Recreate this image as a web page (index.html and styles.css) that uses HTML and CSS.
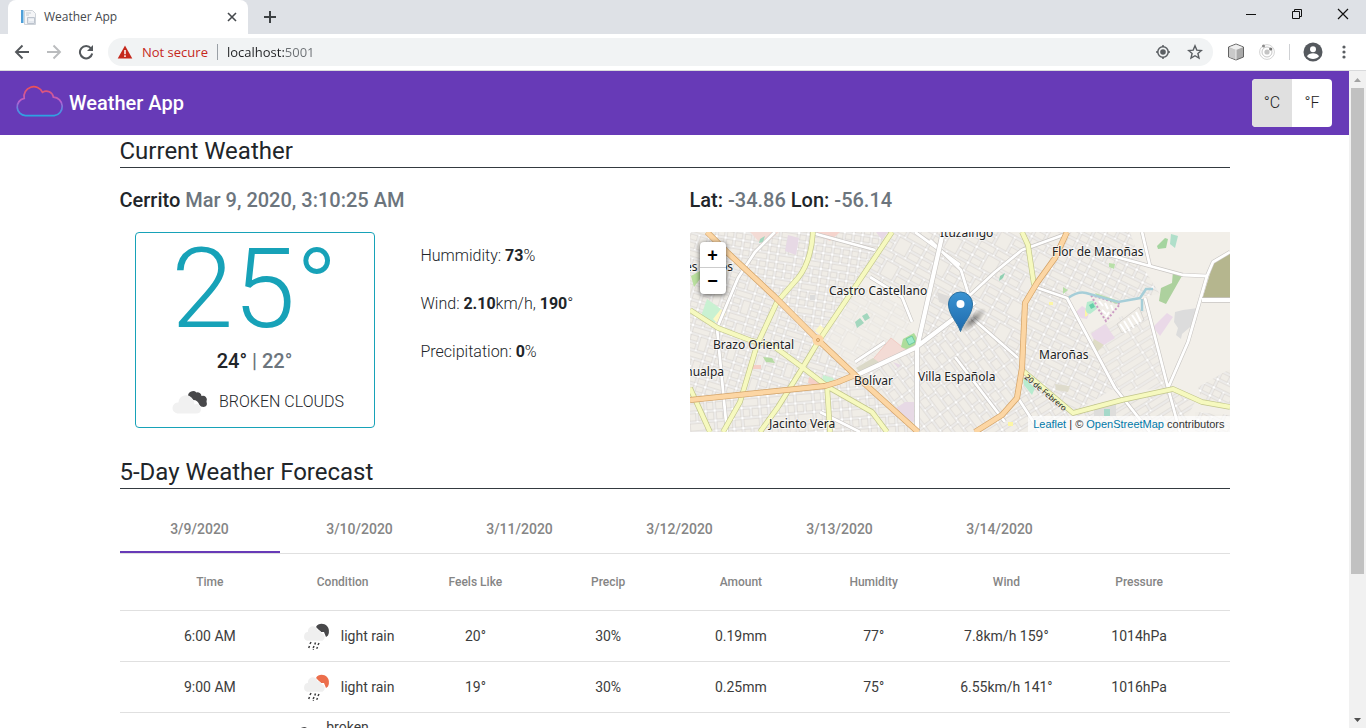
FILE: index.html
```html
<!DOCTYPE html>
<html lang="en">
<head>
<meta charset="utf-8">
<title>Weather App</title>
<link rel="stylesheet" href="styles.css">
</head>
<body>
<div class="tabstrip">
  <div class="browser-tab">
    <svg class="favicon" width="16" height="16" viewBox="0 0 16 16"><path d="M1 1h2v13H1z" fill="#4f9fd8"/><path d="M3 1h1v13H3z" fill="#a5d2f0"/><path d="M4.500 1.500h8l3 3v11h-11z" fill="#f4f5f7" stroke="#ced3d9"/><path d="M6 4h5M6 6h3" stroke="#c4cbd2"/><path d="M7.500 8.500h7v6h-7z" fill="#e4e8ee" stroke="#bdc4ce"/><path d="M9 11h5" stroke="#fff"/></svg>
    <span class="browser-tab-title">Weather App</span>
    <button class="icon-button" aria-label="Close tab"><svg width="10" height="10" viewBox="0 0 10 10"><path d="M1 1l8 8M9 1L1 9" stroke="#45494d" stroke-width="1.6"/></svg></button>
  </div>
  <button class="icon-button new-tab" aria-label="New tab"><svg width="14" height="14" viewBox="0 0 14 14"><path d="M7 1v12M1 7h12" stroke="#3c4043" stroke-width="2"/></svg></button>
  <div class="window-buttons">
    <button class="icon-button" aria-label="Minimize"><svg width="12" height="12" viewBox="0 0 12 12"><path d="M1 6.500h10" stroke="#111"/></svg></button>
    <button class="icon-button" aria-label="Restore"><svg width="12" height="12" viewBox="0 0 12 12" fill="none" stroke="#111"><path d="M1.500 3.500h7v7h-7z"/><path d="M3.500 3.500v-2h7v7h-2"/></svg></button>
    <button class="icon-button" aria-label="Close"><svg width="12" height="12" viewBox="0 0 12 12"><path d="M1 1l10 10M11 1L1 11" stroke="#111" stroke-width="1.200"/></svg></button>
  </div>
</div>
<div class="toolbar">
  <button class="icon-button nav-button" aria-label="Back"><svg width="16" height="16" viewBox="0 0 16 16" fill="none" stroke="#54585c" stroke-width="1.900"><path d="M15 8H2M8.500 1.500L2 8l6.500 6.500"/></svg></button>
  <button class="icon-button nav-button" aria-label="Forward"><svg width="16" height="16" viewBox="0 0 16 16" fill="none" stroke="#babcbe" stroke-width="1.900"><path d="M1 8h13M7.500 1.500L14 8l-6.500 6.500"/></svg></button>
  <button class="icon-button nav-button" aria-label="Reload"><svg width="16" height="16" viewBox="0 0 16 16"><path d="M13 4.300A6.200 6.200 0 1 0 14.200 9.500" fill="none" stroke="#54585c" stroke-width="2"/><path d="M15 1v6H9z" fill="#54585c"/></svg></button>
  <div class="address-bar">
    <svg width="16" height="16" viewBox="0 0 16 16"><path d="M8 1.500L15.300 14.500H.7z" fill="#c5281c"/><path d="M8 6v4.200M8 11.300v1.700" stroke="#fff" stroke-width="1.500"/></svg>
    <span class="not-secure">Not secure</span>
    <span class="address-divider"></span>
    <input class="address-input" type="text" value="localhost:5001" aria-label="Address">
    <button class="icon-button" aria-label="Location"><svg width="16" height="16" viewBox="0 0 16 16"><circle cx="8" cy="8" r="5.200" fill="none" stroke="#5a5e62" stroke-width="1.500"/><circle cx="8" cy="8" r="2.800" fill="#5a5e62"/><path d="M8 1v2M8 13v2M1 8h2M13 8h2" stroke="#5a5e62" stroke-width="1.500"/></svg></button>
    <button class="icon-button" aria-label="Bookmark"><svg width="16" height="16" viewBox="0 0 16 16"><path d="M8 1.800l1.800 4.300 4.600.4-3.500 3 1.100 4.600L8 11.700l-4 2.400 1.100-4.600-3.500-3 4.600-.4z" fill="none" stroke="#5a5e62" stroke-width="1.400"/></svg></button>
  </div>
  <div class="extensions">
    <button class="icon-button" aria-label="Extension"><svg width="18" height="18" viewBox="0 0 18 18"><path d="M9 1l7.500 3v10L9 17l-7.500-3V4z" fill="#aaa" stroke="#626262"/><path d="M2 4.500l7 2.500v9.500L2 14z" fill="#c9c9c9"/><path d="M9 1.500L16 4.300 9 7 2 4.300z" fill="#efefef"/><path d="M9 7v9.500" stroke="#eee"/></svg></button>
    <button class="icon-button" aria-label="Extension"><svg width="18" height="18" viewBox="0 0 18 18"><circle cx="9" cy="9" r="7.400" fill="none" stroke="#d4d4d4"/><circle cx="9" cy="9" r="5" fill="none" stroke="#c6c6c6"/><circle cx="9" cy="9" r="2.600" fill="#c4c4c4"/><circle cx="5.500" cy="3" r="1.500" fill="#8b8b8b"/><circle cx="12.700" cy="6" r="1.600" fill="#777"/></svg></button>
    <span class="extension-divider"></span>
    <button class="icon-button" aria-label="Profile"><svg width="20" height="20" viewBox="0 0 20 20"><circle cx="10" cy="10" r="9.500" fill="#55595e"/><circle cx="10" cy="7.300" r="3" fill="#fff"/><path d="M4 14.300c1.800-4 10.200-4 12 0-2.700 3.600-9.300 3.600-12 0z" fill="#fff"/></svg></button>
    <button class="icon-button" aria-label="Menu"><svg width="16" height="16" viewBox="0 0 16 16" fill="#5a5e62"><circle cx="8" cy="3" r="1.600"/><circle cx="8" cy="8" r="1.600"/><circle cx="8" cy="13" r="1.600"/></svg></button>
  </div>
</div>

<svg class="symbols" width="0" height="0" aria-hidden="true">
  <symbol id="broken-clouds" viewBox="-3 2 50 50">
    <path d="M20 21a5 5 0 0 1 8.500-3.500a4 4 0 0 1 5 3.500a4 4 0 0 1 5 5.500q1.500 5-3 5.500-3 0-4-2-2-5-6-5-2-3-5.500-4z" fill="#48484a"/>
    <path d="M9.500 38.500a5.500 5.500 0 0 1 1-11a7.500 7.500 0 0 1 14-3.500 6 6 0 0 1 2 5.500a4.500 4.500 0 0 1 6.500 4.500q0 4.500-5 4.500z" fill="#f1f1f1"/>
  </symbol>
  <symbol id="rain" viewBox="0 0 50 50">
    <path d="M25 16c2-4 8-4 11-1q3.500 4 1 9.500l-2 1.500-2-5h-3z" fill="currentColor"/>
    <path d="M16 29.800a4.700 4.700 0 0 1 1-9a4.800 4.800 0 0 1 9.500-1.500a3.500 3.500 0 0 1 4 2.700a4.200 4.200 0 0 1 1 7.800z" fill="#efefef"/>
    <path d="M20 31l-1 2M24.500 31.500l-.7 2M28 32l-1 2M18.500 35l-.8 2M23 35l-.8 2M26.500 36l-.8 1.800M22.500 38l-.4.7" stroke="#3c3c3e" stroke-width="1.500"/>
  </symbol>
</svg>

<div class="viewport">
  <div class="page">
    <header class="app-header">
      <svg class="logo" width="48" height="48" viewBox="0 0 48 48"><defs><linearGradient id="logo-stroke" x1="0" y1="7" x2="0" y2="38" gradientUnits="userSpaceOnUse"><stop offset="0" stop-color="#f05050"/><stop offset=".5" stop-color="#b85fd0"/><stop offset=".75" stop-color="#5e86e0"/><stop offset="1" stop-color="#22a9e3"/></linearGradient></defs><path d="M9.500 36.700A8.800 8.800 0 0 1 8.200 19.300A9.700 9.700 0 0 1 26.500 13.300A7.200 7.200 0 0 1 37.400 18.200A9.300 9.300 0 0 1 38.200 36.700z" fill="none" stroke="url(#logo-stroke)" stroke-width="1.700"/></svg>
      <h1 class="app-title">Weather App</h1>
      <div class="unit-toggle">
        <button class="unit-button unit-active">°C</button>
        <button class="unit-button">°F</button>
      </div>
    </header>
    <main class="container">
      <h2 class="section-title">Current Weather</h2>
      <div class="current">
        <section>
          <h3 class="subheading">Cerrito <span class="muted">Mar 9, 2020, 3:10:25 AM</span></h3>
          <div class="conditions">
            <div class="card">
              <div class="temperature">25°</div>
              <div class="range">24° <span class="muted">| 22°</span></div>
              <div class="summary"><svg class="weather-icon"><use href="#broken-clouds"/></svg><span>BROKEN CLOUDS</span></div>
            </div>
            <div class="stats">
              <div>Hummidity: <b>73</b>%</div>
              <div>Wind: <b>2.10</b>km/h, <b>190</b>°</div>
              <div>Precipitation: <b>0</b>%</div>
            </div>
          </div>
        </section>
        <section>
          <h3 class="subheading">Lat: <span class="muted">-34.86</span> Lon: <span class="muted">-56.14</span></h3>
          <div class="map">
            <svg class="map-canvas" viewBox="0 0 540 200" preserveAspectRatio="xMidYMid slice">
              <defs>
                <pattern id="north" width="27" height="24" patternUnits="userSpaceOnUse" patternTransform="rotate(9)"><path d="M0 0h27v24H0z" fill="#fff"/><path d="M1 1h7v6H1zM10 1h7v6h-7zM19 1h7v6h-7zM1 9h7v6H1zM10 9h16v6H10zM1 17h7v6H1zM10 17h7v6h-7zM19 17h7v6h-7z" fill="#f0ede7" stroke="#cfccc8" stroke-width=".8" stroke-linejoin="round"/></pattern>
                <pattern id="west" width="30" height="24" patternUnits="userSpaceOnUse" patternTransform="rotate(17)"><path d="M0 0h30v24H0z" fill="#fff"/><path d="M1 1h8v6H1zM11 1h8v14h-8zM21 1h8v6h-8zM1 9h8v6H1zM21 9h8v6h-8zM1 17h18v6H1zM21 17h8v6h-8z" fill="#f0ede7" stroke="#cfccc8" stroke-width=".8" stroke-linejoin="round"/></pattern>
                <pattern id="southwest" width="27" height="20" patternUnits="userSpaceOnUse" patternTransform="rotate(-5)"><path d="M0 0h27v20H0z" fill="#fff"/><path d="M1 1h7v8H1zM10 1h7v8h-7zM19 1h7v8h-7zM1 11h7v8H1zM10 11h16v8H10z" fill="#f0ede7" stroke="#cfccc8" stroke-width=".8" stroke-linejoin="round"/></pattern>
                <pattern id="centre" width="43" height="27" patternUnits="userSpaceOnUse" patternTransform="rotate(29)"><path d="M0 0h43v27H0z" fill="#fff"/><path d="M1 1h17v7H1zM20 1h22v7H20zM1 10h11v7H1zM14 10h14v16H14zM30 10h12v7H30zM1 19h11v7H1zM30 19h12v7H30z" fill="#f0ede7" stroke="#cfccc8" stroke-width=".8" stroke-linejoin="round"/></pattern>
                <pattern id="south" width="20" height="37" patternUnits="userSpaceOnUse" patternTransform="rotate(-37)"><path d="M0 0h20v37H0z" fill="#fff"/><path d="M1 1h8v11H1zM11 1h8v15h-8zM1 14h8v10H1zM11 18h8v18h-8zM1 26h8v10H1z" fill="#f0ede7" stroke="#cfccc8" stroke-width=".8" stroke-linejoin="round"/></pattern>
                <pattern id="east" width="33" height="27" patternUnits="userSpaceOnUse" patternTransform="rotate(26)"><path d="M0 0h33v27H0z" fill="#fff"/><path d="M1 1h9v7H1zM12 1h9v7h-9zM23 1h9v7h-9zM1 10h9v7H1zM12 10h20v7H12zM1 19h9v7H1zM12 19h9v7h-9zM23 19h9v7h-9z" fill="#f0ede7" stroke="#cfccc8" stroke-width=".8" stroke-linejoin="round"/></pattern>
                <pattern id="southeast" width="40" height="27" patternUnits="userSpaceOnUse" patternTransform="rotate(-32)"><path d="M0 0h40v27H0z" fill="#fff"/><path d="M1 1h20v7H1zM23 1h16v7H23zM1 10h14v7H1zM17 10h22v7H17zM1 19h9v7H1zM12 19h27v7H12z" fill="#f0ede7" stroke="#cfccc8" stroke-width=".8" stroke-linejoin="round"/></pattern>
                <linearGradient id="pin" x1="0" y1="0" x2="0" y2="1"><stop offset="0" stop-color="#3a93d2"/><stop offset="1" stop-color="#1f6aac"/></linearGradient>
                <radialGradient id="pin-shadow"><stop offset="0" stop-color="#000" stop-opacity=".45"/><stop offset="1" stop-color="#000" stop-opacity="0"/></radialGradient>
              </defs>
              <path d="M0 0h540v200H0z" fill="#f2efe9"/>
              <path d="M17 0H202L128 110z" fill="url(#north)"/>
              <path d="M0 0H17L128 110 165 143 135 154 0 168z" fill="url(#west)"/>
              <path d="M0 168L135 154 165 143 228 200H0z" fill="url(#southwest)"/>
              <path d="M202 0H253L240 60 205 55 165 42z" fill="url(#centre)"/>
              <path d="M165 50l50 25 10 40-60 28-35-35z" fill="url(#centre)" opacity=".45"/>
              <path d="M165 144L227 116 262 86 282 86 332 130 327 166 285 200H228z" fill="url(#south)"/>
              <path d="M253 0H377L347 51 335 71 332 130 282 86 227 116z" fill="url(#centre)"/>
              <path d="M377 0H440L452 34 470 62 428 68 388 58 378 66 345 55z" fill="url(#east)"/>
              <path d="M345 55L377 66 425 156 383 181 332 138 335 71z" fill="url(#east)"/>
              <path d="M400 100L440 80 458 78 478 156 425 160z" fill="url(#southeast)" opacity=".8"/>
              <path d="M332 138L383 181 483 157 505 170 490 200H285L327 166z" fill="url(#southeast)"/>
              <path d="M508 155l32-18v35l-28-3zM505 180l35 3v17h-35z" fill="url(#east)"/>
              <g>
                <path d="M60 0h29L73 14z" fill="#f3dbd5"/><path d="M122 0h28l-10 9z" fill="#f5d4cd"/><path d="M98 3l11 3-3 17-11-4z" fill="#e7d9e5"/>
                <path d="M17 67l14 10-6 14-14-7z" fill="#c9f1d2"/><path d="M31 77l5 5-9 9-4-4z" fill="#fdf8c5"/><path d="M1 44l9-5v8l-6 8z" fill="#b9df9e"/>
                <path d="M165 90l5-4 4 5-7 5zM172 84l5-3 3 5-5 3zM70 7l5-3-2 6-4 1z" fill="#a3d7be"/>
                <path d="M201 106l15 12-30 18-7-4z" fill="#f3dbd5" stroke="#f0b5aa" stroke-width=".5"/><path d="M166 136l17-10 7 5-20 9z" fill="#dbd9c8"/>
                <path d="M213 107l11-6 7 12-10 6-10-4z" fill="#addd9b"/><path d="M216 107l6-3 3 6-6 3z" fill="#9feacb" stroke="#6fc9a0"/>
                <path d="M119 145l14 7-2 4-13-5z" fill="#f5cfc6"/><path d="M133 143l10 3 3 5-14-1z" fill="#c9f1d2"/><path d="M125 99l5-6 6 5-3 7z" fill="#fdf8c5"/><path d="M73 125l9 1 3 5-9-1z" fill="#b6dba4"/>
                <path d="M200 180l15-10h9v20l-14-3z" fill="#e7d9e5"/><path d="M247 60l14 5v10l-12-5z" fill="#dddbd9"/>
                <path d="M63 133h8v4h-8z" fill="#f5cfc6"/><path d="M186 0h12l-6 8zM203 130l8 3-3 3z" fill="#e7d9e5"/><path d="M120 63h5v5h-5z" fill="#dcdcdc"/>
                <path d="M467 14l8-8 3 1-2 9-8 1z" fill="#a5d5a0"/><path d="M481 2l7 2-3 12-5-4z" fill="#b0dfca"/><path d="M483 39l10 3-17 30-7-3 2-13 11-5z" fill="#add19e"/>
                <path d="M523 32l17-12v49l-28-1z" fill="#b5b68e"/><path d="M463 95l14-14 6 4-13 19z" fill="#ead9e8"/><path d="M485 80l8-2 15-2-2 14-14 12-1 5-5-4 2-7-4-6z" fill="#dcdcdc"/>
                <path d="M386 80l6-6 8 5-3 8-6-1zM401 102l14-10 10 14-16 10z" fill="#ead9e8"/><path d="M404 107l10 6-7 7-5-8z" fill="#dedcc5"/>
                <path d="M397 70l8-2 3 8-8 6-5-2z" fill="#b7ebcf"/><path d="M399 73l4-2 2 4-4 2z" fill="#67cfa9"/><path d="M395 77l3 6-3 2z" fill="#fcf6a5"/>
                <path d="M401 64l7-2 22 9-14 18-6-6z" fill="#f0ede7"/><path d="M409 69l4 5M415 71l3 6M421 73l2 5M412 78l4 4M419 80l-3 5" stroke="#fff" stroke-width="2"/><path d="M401 63l29 9-14 17-7-11z" fill="none" stroke="#cb9bc4" stroke-width="2" stroke-dasharray="2 2"/>
                <path d="M405 61l24 8-2 3-20-8z" fill="#b6e0a6"/><path d="M333 145l12 11-3 7-8-10z" fill="#b7ebcf"/><path d="M365 152l15 2-2 6-12-2z" fill="#dedbcc"/><path d="M404 172h22v12h-22z" fill="#dedddb"/><path d="M414 177h6v7h-6z" fill="#a5d9ca"/>
                <path d="M373 55l5 3-5 4zM419 31l6 1-1 5-5-2z" fill="#b9e0a9"/><path d="M310 44l5-3-2 5-4 3z" fill="#91d0b3"/><path d="M359 70h4v3h-4zM318 190h5v4h-5z" fill="#fcf6a5"/>
              </g>
              <g stroke="#cfccc8" stroke-width=".7"><path d="M427 92l22-17 5 13-22 13z" fill="#f0ede7"/><path d="M430 92l6 9M434 89l6 10M438 86l6 10M442 83l6 9M446 80l5 10" stroke="#fff" stroke-width="2"/></g>
              <path d="M378 66q10-7 18-5l32 9 22-4 6-9h7M452 67v12" fill="none" stroke="#a6ced8" stroke-width="2.500"/>
              <g fill="none" stroke-linejoin="round">
                <path d="M85 0L65 20 48 46 27 96 37 200M122 1L185 18M180 45L212 65 222 90M225 0L270 33M240 8L271 38 279 64 305 40 332 18 376 2M345 55L377 66 425 156 460 200M282 86L328 126M265 125L315 190M408 20L493 43 517 44 523 30 540 20M517 44L498 110 478 156 490 200M455 66L478 156M165 130l30-20M350 200l-22-34M130 180l40 20M452 0l8 34" stroke="#c8c5c2" stroke-width="4"/>
                <path d="M85 0L65 20 48 46 27 96 37 200M122 1L185 18M180 45L212 65 222 90M225 0L270 33M240 8L271 38 279 64 305 40 332 18 376 2M345 55L377 66 425 156 460 200M282 86L328 126M265 125L315 190M408 20L493 43 517 44 523 30 540 20M517 44L498 110 478 156 490 200M455 66L478 156M165 130l30-20M350 200l-22-34M130 180l40 20M452 0l8 34" stroke="#fff" stroke-width="2.800"/>
                <path d="M253 0L227 116V200M165 144L225 116 262 88 285 70M512 68h28" stroke="#c8c5c2" stroke-width="5.500"/>
                <path d="M253 0L227 116V200M165 144L225 116 262 88 285 70M512 68h28" stroke="#fff" stroke-width="4.200"/>
                <path d="M123 0Q121 30 108 46L87 70 67 113 50 170 33 200M202 0L128 110 113 135 88 175 70 200M0 78L28 96 62 109 82 113 112 135 138 155 182 180 197 200M137 153L140 200M0 156L20 200M332 0L338 13 344 53M332 138L383 181 432 168 483 157 512 170 540 175" stroke="#c2c68b" stroke-width="5.500"/>
                <path d="M123 0Q121 30 108 46L87 70 67 113 50 170 33 200M202 0L128 110 113 135 88 175 70 200M0 78L28 96 62 109 82 113 112 135 138 155 182 180 197 200M137 153L140 200M0 156L20 200M332 0L338 13 344 53M332 138L383 181 432 168 483 157 512 170 540 175" stroke="#f6f9bf" stroke-width="4.200"/>
                <path d="M17 0L38 21 85 65 128 108 165 143 228 200M0 168L135 154 148 150 165 143M377 0L365 26 347 51 335 71 332 136 327 166 312 183 285 200" stroke="#d3a368" stroke-width="6"/>
                <path d="M17 0L38 21 85 65 128 108 165 143 228 200M0 168L135 154 148 150 165 143M377 0L365 26 347 51 335 71 332 136 327 166 312 183 285 200" stroke="#fcd6a4" stroke-width="4.600"/>
                <circle cx="128" cy="108" r="3.500" stroke="#fcd6a4" stroke-width="4"/><circle cx="128" cy="108" r="1.500" stroke="#c98f4d" stroke-width=".8"/>
              </g>
              <g class="map-labels">
                <text x="362" y="24">Flor de Maroñas</text><text x="139" y="63">Castro Castellano</text><text x="23" y="117">Brazo Oriental</text>
                <text x="164" y="153">Bolívar</text><text x="228" y="149">Villa Española</text><text x="349" y="127">Maroñas</text><text x="79" y="196">Jacinto Vera</text>
                <text x="34" y="144" text-anchor="end">Atahualpa</text><text x="250" y="5">Ituzaingó</text><text x="43" y="39" text-anchor="end">Aires Puros</text>
              </g>
              <text class="street-label" transform="translate(334 146) rotate(40)">20 de Febrero</text>
              <ellipse cx="283" cy="88" rx="17" ry="6" fill="url(#pin-shadow)" transform="rotate(-42 283 88)"/>
              <path d="M270.500 99.500C267.500 90 258.500 83 258.500 72a12 12 0 0 1 24 0c0 11-9 18-12 27.500z" fill="url(#pin)" stroke="#2b6f9f"/>
              <circle cx="270.500" cy="72" r="4" fill="#fff"/>
            </svg>
            <div class="zoom-control"><button class="zoom-button" aria-label="Zoom in">+</button><button class="zoom-button" aria-label="Zoom out">−</button></div>
            <div class="attribution"><a href="#">Leaflet</a> | © <a href="#">OpenStreetMap</a> contributors</div>
          </div>
        </section>
      </div>
      <h2 class="section-title">5-Day Weather Forecast</h2>
      <div class="tabs" role="tablist">
        <button class="tab tab-active" role="tab" aria-selected="true">3/9/2020</button><button class="tab" role="tab">3/10/2020</button><button class="tab" role="tab">3/11/2020</button><button class="tab" role="tab">3/12/2020</button><button class="tab" role="tab">3/13/2020</button><button class="tab" role="tab">3/14/2020</button>
      </div>
      <table class="forecast">
        <thead><tr><th>Time</th><th>Condition</th><th>Feels Like</th><th>Precip</th><th>Amount</th><th>Humidity</th><th>Wind</th><th>Pressure</th></tr></thead>
        <tbody>
          <tr><td>6:00 AM</td><td><svg class="weather-icon night"><use href="#rain"/></svg><span class="condition">light rain</span></td><td>20°</td><td>30%</td><td>0.19mm</td><td>77°</td><td>7.8km/h 159°</td><td>1014hPa</td></tr>
          <tr><td>9:00 AM</td><td><svg class="weather-icon day"><use href="#rain"/></svg><span class="condition">light rain</span></td><td>19°</td><td>30%</td><td>0.25mm</td><td>75°</td><td>6.55km/h 141°</td><td>1016hPa</td></tr>
          <tr><td></td><td><svg class="weather-icon"><use href="#broken-clouds"/></svg><span class="condition">broken clouds</span></td><td></td><td></td><td></td><td></td><td></td><td></td></tr>
        </tbody>
      </table>
    </main>
  </div>
  <div class="scrollbar">
    <svg width="17" height="17" viewBox="0 0 17 17"><path d="M5 11l3.500-4 3.500 4z" fill="#a3a3a3"/></svg>
    <div class="scroll-track"><div class="scroll-thumb"></div></div>
    <svg width="17" height="17" viewBox="0 0 17 17"><path d="M5 7l3.500 4L12 7z" fill="#505050"/></svg>
  </div>
</div>
</body>
</html>
```

FILE: styles.css
```css
* { box-sizing: border-box; }
body {
  margin: 0;
  height: 100vh;
  display: flex;
  flex-direction: column;
  overflow: hidden;
  background: #fff;
  color: #212529;
  font: 300 16px/24px Roboto, sans-serif;
}
h1, h2, h3 { margin: 0; }
button { font: inherit; color: inherit; border: 0; padding: 0; background: none; cursor: pointer; }
svg { display: block; flex: none; }
.symbols { position: absolute; }
.icon-button { display: flex; align-items: center; justify-content: center; flex: none; }

/* Browser frame */
.tabstrip {
  display: flex;
  align-items: center;
  flex: none;
  height: 34px;
  padding-left: 8px;
  background: #dee1e6;
  font: 400 12px/16px "Open Sans", sans-serif;
}
.browser-tab {
  display: flex;
  align-items: center;
  gap: 8px;
  width: 240px;
  height: 34px;
  padding: 0 11px 0 12px;
  border-radius: 8px 8px 0 0;
  background: #fff;
  color: #45494d;
}
.browser-tab-title { flex: 1; }
.new-tab { margin-left: 15px; }
.window-buttons { display: flex; gap: 34px; margin-left: auto; padding: 0 17px 6px 0; }
.toolbar {
  display: flex;
  align-items: center;
  flex: none;
  height: 37px;
  padding: 0 15px 0 14px;
  gap: 16px;
  border-bottom: 1px solid #d9dadc;
  font: 400 13px/20px "Open Sans", sans-serif;
}
.address-bar {
  display: flex;
  align-items: center;
  flex: 1;
  height: 28px;
  gap: 9px;
  margin: 0 -2px;
  padding: 0 10px 0 9px;
  border-radius: 14px;
  background: #f1f3f4;
}
.not-secure { color: #c5281c; }
.address-divider { width: 1px; height: 16px; background: #9aa0a6; }
.address-input {
  flex: 1;
  border: 0;
  padding: 0;
  font: inherit;
  background: linear-gradient(90deg, #202124 57px, #6b6f73 57px);
  background-clip: text;
  color: transparent;
  outline: 0;
}
.address-bar .icon-button { margin-left: 7px; }
.extensions { display: flex; align-items: center; gap: 13px; }
.extensions .icon-button:last-child { margin-right: -1px; }
.extension-divider { width: 1px; height: 16px; background: #cfd1d4; }

.viewport { display: flex; flex: 1; min-height: 0; }
.page { flex: 1; min-width: 0; overflow: hidden; }
.scrollbar { display: flex; flex-direction: column; width: 17px; background: #f1f1f1; }
.scroll-track { flex: 1; padding: 0 2px; }
.scroll-thumb { height: 78%; background: #c1c1c1; }

/* Application */
.app-header {
  display: flex;
  align-items: center;
  gap: 5px;
  height: 64px;
  padding: 0 17px 0 16px;
  background: #673ab7;
  color: #fff;
}
.app-title { font-size: 20px; font-weight: 500; line-height: 32px; }
.unit-toggle {
  display: flex;
  height: 48px;
  margin-left: auto;
  overflow: hidden;
  border-radius: 4px;
  background: #fff;
  color: #212121;
}
.unit-button { width: 40px; }
.unit-active { background: #e0e0e0; }
.container { max-width: 1140px; margin: 0 auto; padding: 0 15px; }
.section-title {
  border-bottom: 1px solid #343a40;
  font-size: 24px;
  font-weight: 400;
  line-height: 32px;
}
.current { display: grid; grid-template-columns: 1fr 1fr; gap: 30px; padding: 16px 0 24px; }
.subheading { margin-bottom: 16px; font-size: 20px; font-weight: 500; line-height: 32px; }
.muted { color: #6c757d; }
.conditions { display: flex; align-items: flex-start; gap: 46px; padding-left: 15px; }
.card { width: 240px; border: 1px solid #17a2b8; border-radius: 4px; text-align: center; }
.temperature { color: #17a2b8; font-size: 112px; line-height: 112px; }
.range { font-size: 20px; font-weight: 500; line-height: 32px; }
.summary { display: flex; align-items: center; justify-content: center; gap: 4px; height: 50px; }
.weather-icon { width: 50px; height: 50px; }
.night { color: #48484a; }
.day { color: #ec6e4c; }
.stats { line-height: 48px; }
.stats b { font-weight: 700; }

.map { position: relative; height: 200px; overflow: hidden; }
.map-canvas { width: 100%; height: 100%; }
.map-labels {
  font: 400 12px "Noto Sans", sans-serif;
  fill: #222;
  stroke: rgba(255, 255, 255, 0.6);
  stroke-width: 2px;
  paint-order: stroke;
}
.street-label { font: 400 8px "Noto Sans", sans-serif; fill: #222; }
.zoom-control {
  position: absolute;
  top: 10px;
  left: 10px;
  display: flex;
  flex-direction: column;
  overflow: hidden;
  border-radius: 4px;
  background: #fff;
  box-shadow: 0 1px 5px rgba(0, 0, 0, 0.65);
}
.zoom-button { width: 26px; height: 26px; color: #000; font: 700 18px/26px "Liberation Sans", sans-serif; }
.zoom-button:first-child { border-bottom: 1px solid #ccc; }
.attribution {
  position: absolute;
  right: 0;
  bottom: 0;
  padding: 0 5px;
  background: rgba(255, 255, 255, 0.7);
  color: #333;
  font: 400 11px/16px "Liberation Sans", sans-serif;
}
.attribution a { color: #0078a8; text-decoration: none; }

.tabs { display: flex; margin-top: 16px; border-bottom: 1px solid #e0e0e0; }
.tab {
  width: 160px;
  height: 48px;
  color: #858585;
  font-size: 14px;
  font-weight: 500;
}
.tab-active { box-shadow: inset 0 -2px #673ab7; }
.forecast { display: block; }
.forecast thead, .forecast tbody { display: block; }
.forecast tr { display: flex; align-items: center; padding: 0 24px; border-bottom: 1px solid #e0e0e0; }
.forecast th, .forecast td {
  display: flex;
  align-items: center;
  justify-content: center;
  flex: 1 1 0;
  min-width: 0;
  height: 50px;
  padding: 0;
}
.forecast th { height: 56px; color: #858585; font-size: 12px; font-weight: 500; }
.forecast td { color: #3c3c3c; font-size: 14px; font-weight: 400; line-height: 21px; }
```
